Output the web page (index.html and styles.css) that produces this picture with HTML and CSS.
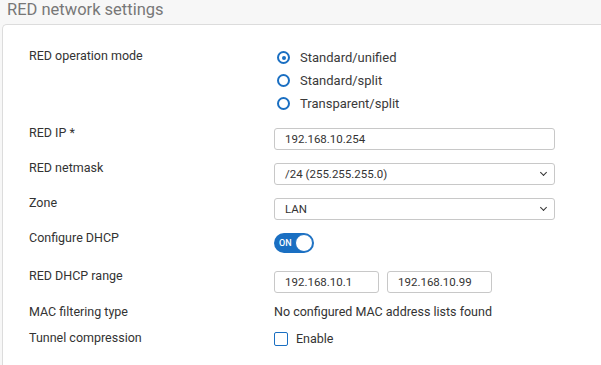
FILE: index.html
```html
<!DOCTYPE html>
<html lang="en">
<head>
    <meta charset="UTF-8">
    <title>RED network settings</title>
    <link rel="stylesheet" href="styles.css">
</head>
<body>
    <h1 class="section-title">RED network settings</h1>

    <div class="panel">
        <div class="row row-radios">
            <div class="label">RED operation mode</div>
            <div class="radio-group">
                <label class="radio checked"><span class="radio-dot"></span>Standard/unified</label>
                <label class="radio"><span class="radio-dot"></span>Standard/split</label>
                <label class="radio"><span class="radio-dot"></span>Transparent/split</label>
            </div>
        </div>

        <div class="row">
            <div class="label">RED IP *</div>
            <div class="control">
                <div class="field field-wide">192.168.10.254</div>
            </div>
        </div>

        <div class="row">
            <div class="label">RED netmask</div>
            <div class="control">
                <div class="field field-wide select">/24 (255.255.255.0)</div>
            </div>
        </div>

        <div class="row">
            <div class="label">Zone</div>
            <div class="control">
                <div class="field field-wide select">LAN</div>
            </div>
        </div>

        <div class="row row-toggle">
            <div class="label">Configure DHCP</div>
            <div class="control">
                <div class="toggle"><span class="toggle-text">ON</span><span class="toggle-knob"></span></div>
            </div>
        </div>

        <div class="row row-range">
            <div class="label">RED DHCP range</div>
            <div class="control range">
                <div class="field field-half">192.168.10.1</div>
                <div class="field field-half">192.168.10.99</div>
            </div>
        </div>

        <div class="row row-text">
            <div class="label">MAC filtering type</div>
            <div class="plain">No configured MAC address lists found</div>
        </div>

        <div class="row row-check">
            <div class="label">Tunnel compression</div>
            <label class="checkbox"><span class="box"></span>Enable</label>
        </div>
    </div>
</body>
</html>
```

FILE: styles.css
```css
body {
    margin: 0;
    padding: 0;
    background-color: #f7f7f7;
    font-family: Roboto, 'Liberation Sans', sans-serif;
    color: #333;
    overflow: hidden;
}

.section-title {
    margin: 0;
    padding: 0 0 4px 7px;
    font-size: 16.5px;
    line-height: 20px;
    font-weight: 400;
    color: #777;
}

.panel {
    margin-left: 2px;
    height: 341px;
    box-sizing: border-box;
    background-color: #fff;
    border: 1px solid #dcdcdc;
    border-right: none;
    border-bottom: none;
    border-radius: 5px 0 0 0;
    padding: 23px 0 0 26px;
}

.row {
    display: grid;
    grid-template-columns: 245px 300px;
    align-items: start;
    margin-bottom: 10px;
}

.label {
    font-size: 12.5px;
    line-height: 16px;
}

.control {
    padding-top: 3px;
}

.radio-group {
    margin-top: -2px;
}

.radio {
    display: flex;
    align-items: center;
    height: 23px;
    font-size: 13px;
    color: #3a3a3a;
}

.radio-dot {
    width: 13px;
    height: 13px;
    box-sizing: border-box;
    border: 2px solid #1a6fc2;
    border-radius: 50%;
    margin: 0 10px 0 3px;
    position: relative;
}

.radio.checked .radio-dot::after {
    content: "";
    position: absolute;
    left: 2.5px;
    top: 2.5px;
    width: 4px;
    height: 4px;
    border-radius: 50%;
    background-color: #1a6fc2;
}

.field {
    height: 22px;
    box-sizing: border-box;
    border: 1px solid #c8c8c8;
    border-radius: 3px;
    padding: 0 10px;
    font-size: 11.5px;
    line-height: 20px;
    color: #333;
    position: relative;
}

.field-wide {
    width: 281px;
}

/* chevron of the select boxes */
.select::after {
    content: "";
    position: absolute;
    right: 8px;
    top: 6px;
    width: 4px;
    height: 4px;
    border-right: 1.5px solid #333;
    border-bottom: 1.5px solid #333;
    transform: rotate(45deg);
}

.row-toggle {
    margin-bottom: 15px;
}

.toggle {
    width: 40px;
    height: 20px;
    box-sizing: border-box;
    border-radius: 10px;
    background-color: #1a6fc2;
    position: relative;
}

.toggle-text {
    position: absolute;
    left: 5px;
    top: 5px;
    font-size: 9px;
    line-height: 10px;
    font-weight: 500;
    color: #fff;
}

.toggle-knob {
    position: absolute;
    right: 1px;
    top: 1px;
    width: 18px;
    height: 18px;
    box-sizing: border-box;
    border-radius: 50%;
    background-color: #fff;
    border: 1px solid #1a6fc2;
}

.range {
    display: flex;
    gap: 8px;
}

.field-half {
    width: 105px;
}

.row-range {
    margin-bottom: 11px;
}

.plain {
    font-size: 12.5px;
    line-height: 16px;
}

.checkbox {
    display: flex;
    align-items: center;
    font-size: 12.5px;
    line-height: 16px;
    margin-top: 1px;
}

.box {
    width: 14px;
    height: 14px;
    box-sizing: border-box;
    border: 1.5px solid #1a6fc2;
    border-radius: 2px;
    margin-right: 8px;
}
```
